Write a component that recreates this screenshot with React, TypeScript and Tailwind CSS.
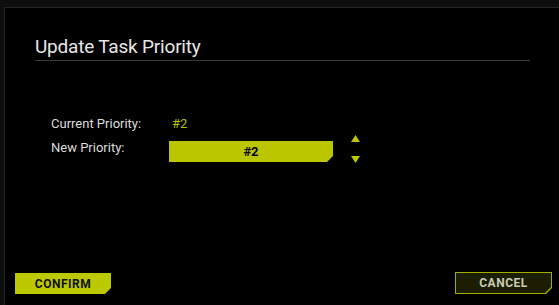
import React, { useState } from 'react';

const chamfer =
  '[clip-path:polygon(0_0,100%_0,100%_calc(100%-6px),calc(100%-6px)_100%,0_100%)]';

const App: React.FC = () => {
  const [priority, setPriority] = useState(2);

  return (
    <div
      className="w-[559px] h-[305px] overflow-hidden bg-[#0e0e0e] pl-[4px] pt-[7px]"
      style={{ fontFamily: 'Roboto, "Noto Sans", sans-serif' }}
    >
      <div className="h-full border-t border-l border-[#232323] bg-black flex flex-col">
        {/* Header */}
        <div className="pl-[30px] pr-[29px] pt-[27px]">
          <h1 className="text-[19px] leading-[24px] text-[#e6e6e6] tracking-[-0.2px] pb-[1px] border-b border-[#3a3a3a]">
            Update Task Priority
          </h1>
        </div>

        {/* Body */}
        <div className="pl-[46px] pt-[54px] flex flex-col gap-[6px] text-[13px] text-[#dcdcdc]">
          <div className="flex items-center h-[18px]">
            <span className="w-[121px]">Current Priority:</span>
            <span className="text-[#b4c000]">#{priority}</span>
          </div>
          <div className="flex items-start">
            <span className="w-[118px] -mt-[1px]">New Priority:</span>
            <div
              className={`mt-[2px] w-[164px] h-[21px] bg-[#bcc600] flex items-center justify-center text-black font-bold text-[13px] ${chamfer}`}
            >
              #{priority}
            </div>
            <div className="ml-[18px] -mt-[4px] flex flex-col gap-[14px]">
              <button
                onClick={() => setPriority(priority + 1)}
                className="w-[9px] h-[7px] flex"
              >
                <svg width="9" height="7" viewBox="0 0 9 7">
                  <polygon points="4.5,0 9,7 0,7" fill="#bcc600" />
                </svg>
              </button>
              <button
                onClick={() => setPriority(Math.max(1, priority - 1))}
                className="w-[9px] h-[7px] flex"
              >
                <svg width="9" height="7" viewBox="0 0 9 7">
                  <polygon points="0,0 9,0 4.5,7" fill="#bcc600" />
                </svg>
              </button>
            </div>
          </div>
        </div>

        {/* Footer */}
        <div className="mt-auto mb-[11px] pl-[10px] pr-[7px] flex justify-between items-end">
          <button
            className={`w-[96px] h-[21px] bg-[#bcc800] text-[#111] font-bold text-[12px] tracking-[0.5px] ${chamfer}`}
          >
            CONFIRM
          </button>
          <div className={`w-[97px] h-[22px] bg-[#a3ad00] p-px flex ${chamfer}`}>
            <button
              className={`flex-1 bg-[#1b1e00] text-[#c9cab8] font-bold text-[12px] tracking-[0.5px] ${chamfer}`}
            >
              CANCEL
            </button>
          </div>
        </div>
      </div>
    </div>
  );
};

export default App;
